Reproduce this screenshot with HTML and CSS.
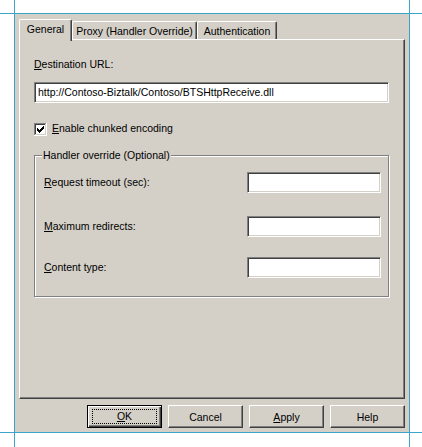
FILE: index.html
```html
<!DOCTYPE html>
<html lang="en">
<head>
    <meta charset="UTF-8">
    <title>HTTP Transport Properties</title>
    <link rel="stylesheet" href="styles.css">
</head>
<body>

    <!-- guide lines round the dialog -->
    <div class="guide guide-h guide-top"></div>
    <div class="guide guide-h guide-bottom"></div>
    <div class="guide guide-v guide-left"></div>
    <div class="guide guide-v guide-right"></div>

    <div class="dialog">
        <div class="tabs">
            <div class="tab tab-active tab-general">General</div>
            <div class="tab tab-proxy">Proxy (Handler Override)</div>
            <div class="tab tab-auth">Authentication</div>
        </div>

        <div class="page">
            <div class="label"><u>D</u>estination URL:</div>
            <div class="field field-url">http://Contoso-Biztalk/Contoso/BTSHttpReceive.dll</div>

            <div class="check-row">
                <svg class="checkbox" width="13" height="13" viewBox="0 0 13 13" shape-rendering="crispEdges">
                    <rect x="0" y="0" width="13" height="13" fill="#ffffff"/>
                    <rect x="0" y="0" width="12" height="12" fill="#808080"/>
                    <rect x="1" y="1" width="11" height="11" fill="#d4d0c8"/>
                    <rect x="1" y="1" width="10" height="10" fill="#404040"/>
                    <rect x="2" y="2" width="9" height="9" fill="#ffffff"/>
                    <rect x="3" y="5" width="1" height="3" fill="#000"/>
                    <rect x="4" y="6" width="1" height="3" fill="#000"/>
                    <rect x="5" y="7" width="1" height="3" fill="#000"/>
                    <rect x="6" y="6" width="1" height="3" fill="#000"/>
                    <rect x="7" y="5" width="1" height="3" fill="#000"/>
                    <rect x="8" y="4" width="1" height="3" fill="#000"/>
                    <rect x="9" y="3" width="1" height="3" fill="#000"/>
                </svg>
                <span class="label"><u>E</u>nable chunked encoding</span>
            </div>

            <div class="group">
                <span class="group-title">Handler override (Optional)</span>

                <div class="row row-timeout">
                    <span class="label"><u>R</u>equest timeout (sec):</span>
                    <div class="field field-short"></div>
                </div>
                <div class="row row-redirects">
                    <span class="label"><u>M</u>aximum redirects:</span>
                    <div class="field field-short"></div>
                </div>
                <div class="row row-content">
                    <span class="label"><u>C</u>ontent type:</span>
                    <div class="field field-short"></div>
                </div>
            </div>
        </div>

        <div class="buttons">
            <div class="button button-default"><span class="focus"><u>O</u>K</span></div>
            <div class="button">Cancel</div>
            <div class="button"><u>A</u>pply</div>
            <div class="button">Help</div>
        </div>
    </div>

</body>
</html>
```

FILE: styles.css
```css
/* General */
body {
    margin: 0;
    background-color: #ffffff;
    font-family: 'Liberation Sans', Arial, sans-serif;
    font-size: 10.5px;
    color: #000000;
    width: 422px;
    height: 447px;
    position: relative;
    overflow: hidden;
}

u {
    text-decoration: underline;
    text-underline-offset: 1px;
}

/* Guide lines */
.guide {
    position: absolute;
    background-color: #3ca5c9;
    z-index: 5;
}

.guide-h {
    left: 0;
    width: 422px;
    height: 1px;
}

.guide-v {
    top: 0;
    width: 1px;
    height: 447px;
}

.guide-top { top: 13px; }
.guide-bottom { top: 432px; }
.guide-left { left: 14px; }
.guide-right { left: 409px; }

/* Dialog */
.dialog {
    margin: 14px 0 0 15px;
    width: 394px;
    height: 418px;
    box-sizing: border-box;
    padding: 5px 4px 0 4px;
    background-color: #d4d0c8;
}

/* Tabs */
.tabs {
    display: flex;
    align-items: flex-end;
    height: 20px;
}

.tab {
    box-sizing: border-box;
    height: 18px;
    line-height: 16px;
    padding-top: 1px;
    text-align: center;
    white-space: nowrap;
    background-color: #d4d0c8;
    border-top: 1px solid #ffffff;
    border-left: 1px solid #ffffff;
    border-right: 1px solid #404040;
    border-radius: 2px 2px 0 0;
    box-shadow: inset -1px 0 #808080;
}

.tab-active {
    height: 22px;
    line-height: 19px;
    padding-top: 0;
    margin-bottom: -2px;
    position: relative;
    z-index: 1;
}

.tab-general { width: 53px; }
.tab-proxy { width: 125px; }
.tab-auth { width: 80px; }

/* Tab page */
.page {
    box-sizing: border-box;
    height: 360px;
    padding: 18px 15px 0 14px;
    border-top: 1px solid #ffffff;
    border-left: 1px solid #ffffff;
    border-right: 1px solid #404040;
    border-bottom: 1px solid #404040;
    box-shadow: inset -1px -1px #808080;
}

.label {
    display: block;
    line-height: 13px;
    white-space: nowrap;
}

.field {
    box-sizing: border-box;
    height: 21px;
    line-height: 19px;
    padding-left: 3px;
    background-color: #ffffff;
    border: 1px solid;
    border-color: #808080 #ffffff #ffffff #808080;
    box-shadow: inset 1px 1px #404040, inset -1px -1px #d4d0c8;
    white-space: nowrap;
    overflow: hidden;
}

.field-url {
    margin-top: 11px;
    width: 355px;
}

.check-row {
    display: flex;
    align-items: center;
    gap: 5px;
    margin-top: 20px;
    height: 13px;
}

.checkbox {
    display: block;
    flex: none;
}

.check-row .label {
    margin-top: -3px;
}

/* Group box */
.group {
    position: relative;
    box-sizing: border-box;
    margin-top: 19px;
    width: 355px;
    height: 142px;
    padding: 16px 7px 0 9px;
    border: 1px solid #808080;
    box-shadow: inset 1px 1px #ffffff, 1px 1px #ffffff;
}

.group-title {
    position: absolute;
    top: -7px;
    left: 7px;
    padding: 0 1px;
    line-height: 13px;
    background-color: #d4d0c8;
    white-space: nowrap;
}

.row {
    display: flex;
    align-items: center;
    justify-content: space-between;
}

.row-redirects { margin-top: 23px; }
.row-content { margin-top: 20px; }

.field-short {
    width: 134px;
}

/* Buttons */
.buttons {
    display: flex;
    justify-content: flex-end;
    gap: 6px;
    margin-top: 6px;
    padding-right: 0;
}

.button {
    box-sizing: border-box;
    width: 75px;
    height: 23px;
    display: flex;
    align-items: center;
    justify-content: center;
    background-color: #d4d0c8;
    border-top: 1px solid #ffffff;
    border-left: 1px solid #ffffff;
    border-right: 1px solid #404040;
    border-bottom: 1px solid #404040;
    box-shadow: inset -1px -1px #808080;
}

.button-default {
    border: 1px solid #000000;
    box-shadow: inset 1px 1px #ffffff, inset -1px -1px #404040, inset -2px -2px #808080;
}

.focus {
    box-sizing: border-box;
    width: 65px;
    height: 15px;
    line-height: 13px;
    text-align: center;
    border: 1px dotted #000000;
}
```
